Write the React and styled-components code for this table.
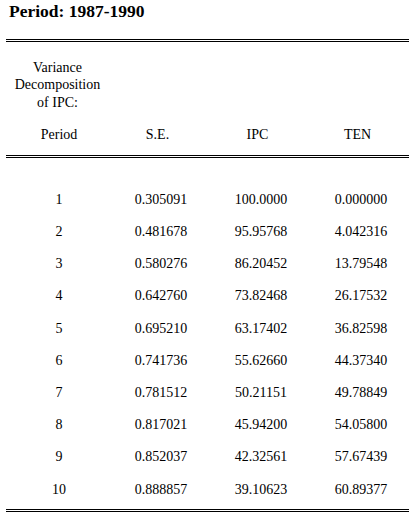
import React from 'react';
import styled, { createGlobalStyle } from 'styled-components';

const GlobalStyle = createGlobalStyle`
  html, body {
    margin: 0;
    padding: 0;
    background: #fff;
  }
  body {
    font-family: "Liberation Serif", "Times New Roman", serif;
    color: #000;
  }
`;

const Page = styled.div`
  width: 413px;
  height: 517px;
  padding: 1px 0 0 6px;
  box-sizing: border-box;
  overflow: hidden;
`;

const Title = styled.h1`
  margin: 0;
  padding-left: 3px;
  height: 38px;
  font-size: 17.5px;
  line-height: 20px;
  font-weight: bold;
`;

const Table = styled.div`
  width: 403px;
  border-top: 3px double #000;
  border-bottom: 3px double #000;
`;

const Head = styled.div`
  display: grid;
  grid-template-columns: 103px 100px 100px 100px;
  padding: 16.5px 0 11.5px;
  border-bottom: 3px double #000;
  font-size: 14px;
  line-height: 17.5px;
`;

const Caption = styled.div`
  grid-column: 1;
  text-align: center;
  margin-bottom: 15px;
`;

const HeadCell = styled.div`
  grid-row: 2;
  text-align: center;
  padding: ${(p) => (p.first ? '0 0 0 3px' : '0 3px 0 0')};
`;

const Body = styled.div`
  padding: 25.5px 0 3.5px;
  font-size: 14px;
  line-height: 17.5px;
`;

const Row = styled.div`
  display: grid;
  grid-template-columns: 103px 100px 100px 100px;
  align-items: center;
  height: 32.2px;
`;

const Cell = styled.div`
  text-align: center;
  padding-left: ${(p) => (p.first ? '3px' : '4px')};
`;

const rows = [
  ['1', '0.305091', '100.0000', '0.000000'],
  ['2', '0.481678', '95.95768', '4.042316'],
  ['3', '0.580276', '86.20452', '13.79548'],
  ['4', '0.642760', '73.82468', '26.17532'],
  ['5', '0.695210', '63.17402', '36.82598'],
  ['6', '0.741736', '55.62660', '44.37340'],
  ['7', '0.781512', '50.21151', '49.78849'],
  ['8', '0.817021', '45.94200', '54.05800'],
  ['9', '0.852037', '42.32561', '57.67439'],
  ['10', '0.888857', '39.10623', '60.89377'],
];

export default function App() {
  return (
    <Page>
      <GlobalStyle />
      <Title>Period: 1987-1990</Title>
      <Table>
        <Head>
          <Caption>
            Variance
            <br />
            Decomposition
            <br />
            of IPC:
          </Caption>
          <HeadCell first>Period</HeadCell>
          <HeadCell>S.E.</HeadCell>
          <HeadCell>IPC</HeadCell>
          <HeadCell>TEN</HeadCell>
        </Head>
        <Body>
          {rows.map((r) => (
            <Row key={r[0]}>
              {r.map((v, i) => (
                <Cell key={i} first={i === 0}>
                  {v}
                </Cell>
              ))}
            </Row>
          ))}
        </Body>
      </Table>
    </Page>
  );
}
